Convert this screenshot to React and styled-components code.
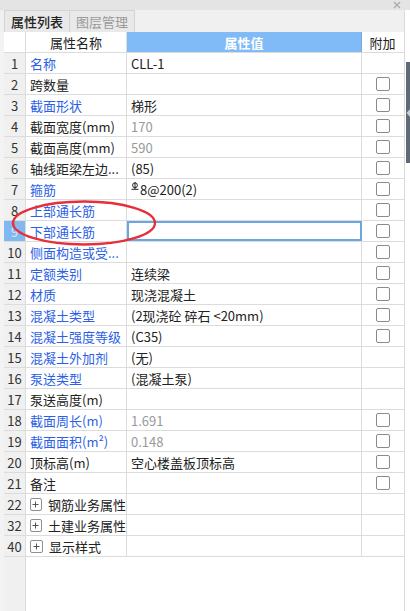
import React from 'react';
import styled, { createGlobalStyle } from 'styled-components';

const GlobalStyle = createGlobalStyle`
  html, body { margin: 0; padding: 0; background: #f3f3f3; }
  body { font-family: "Noto Sans CJK SC", "Noto Sans", sans-serif; font-size: 13px; color: #222; }
`;

const COLS = '22px 101px 235px 41px';

const Window = styled.div`
  width: 410px;
  height: 611px;
  display: flex;
  flex-direction: column;
  overflow: hidden;
`;

const TitleStrip = styled.div`
  height: 10px;
  background: #e4e4e4;
  display: flex;
  justify-content: flex-end;
  align-items: center;
  padding-right: 9px;
`;

const Main = styled.div`
  flex: 1;
  display: flex;
  min-height: 0;
`;

const Panel = styled.div`
  width: 400px;
  margin-left: 4px;
  display: flex;
  flex-direction: column;
  border-right: 1px solid #dadada;
  position: relative;
`;

const SideRail = styled.div`
  flex: 1;
  display: flex;
  justify-content: flex-end;
  background: #fff;
`;

const Handle = styled.div`
  width: 4px;
  height: 101px;
  margin-top: 52px;
  background: #5f6a76;
  display: flex;
  align-items: center;
`;

const TabBar = styled.div`
  height: 22px;
  display: flex;
  background: #f0f0f0;
  margin-left: -4px;
  padding-left: 4px;
`;

const Tab = styled.div`
  width: 64px;
  height: 21px;
  border: 1px solid #d4d4d4;
  border-left: ${({ $first }) => ($first ? '1px solid #d4d4d4' : 'none')};
  border-bottom: none;
  background: #e9e9e9;
  color: ${({ $active }) => ($active ? '#222' : '#9a9a9a')};
  font-weight: ${({ $active }) => ($active ? 500 : 400)};
  display: flex;
  align-items: center;
  justify-content: center;
  font-size: 13px;
`;

const Row = styled.div`
  display: grid;
  grid-template-columns: ${COLS};
  height: 21px;
  border-bottom: 1px solid #dcdcdc;
  box-sizing: border-box;
  background: #fff;
`;

const Cell = styled.div`
  border-right: 1px solid #dcdcdc;
  display: flex;
  align-items: center;
  white-space: nowrap;
  overflow: hidden;
  box-sizing: border-box;
  padding-left: ${({ $pad }) => $pad ?? 4}px;
  justify-content: ${({ $center }) => ($center ? 'center' : 'flex-start')};
  &:last-child { border-right: none; }
`;

const NumCell = styled(Cell)`
  background: ${({ $selected }) => ($selected ? '#80b8ef' : '#f0f0f0')};
  color: ${({ $selected }) => ($selected ? '#d4e7fa' : '#333')};
  justify-content: center;
  padding-left: 0;
  font-size: 13px;
`;

const HeadValue = styled(Cell)`
  background: #80bbf7;
  color: #fff;
  font-weight: 700;
  justify-content: center;
  padding-left: 0;
  border-right: 1px solid #7aa9da;
`;

const NameText = styled.span`
  color: ${({ $link }) => ($link ? '#2c5fe6' : '#222')};
`;

const ValueCell = styled(Cell)`
  color: ${({ $muted }) => ($muted ? '#9a9a9a' : '#222')};
  ${({ $selected }) =>
    $selected &&
    `
    border: 2px solid #6aa6e2;
    padding-left: 2px;
  `}
`;

const Check = styled.div`
  width: 12px;
  height: 12px;
  border: 1px solid #8a8a8a;
  border-radius: 2px;
  background: #fff;
`;

const Expander = styled.div`
  width: 11px;
  height: 11px;
  border: 1px solid #8f8f8f;
  border-radius: 2px;
  display: flex;
  align-items: center;
  justify-content: center;
  margin-right: 6px;
`;

const Filler = styled.div`
  flex: 1;
  display: grid;
  grid-template-columns: 22px 1fr;
`;

const FillerNum = styled.div`
  background: #f0f0f0;
  border-right: 1px solid #dcdcdc;
`;

const FillerRest = styled.div`
  background: #fff;
`;

const Ring = styled.svg`
  position: absolute;
  left: 4px;
  top: 189px;
  pointer-events: none;
`;

const RebarMark = styled.svg`
  margin-right: 1px;
  margin-top: -6px;
`;

const rows = [
  { n: 1, name: '名称', link: true, value: 'CLL-1', box: false },
  { n: 2, name: '跨数量', value: '', box: true },
  { n: 3, name: '截面形状', link: true, value: '梯形', box: true },
  { n: 4, name: '截面宽度(mm)', value: '170', muted: true, box: true },
  { n: 5, name: '截面高度(mm)', value: '590', muted: true, box: true },
  { n: 6, name: '轴线距梁左边...', value: '(85)', box: true },
  { n: 7, name: '箍筋', link: true, value: '8@200(2)', rebar: true, box: true },
  { n: 8, name: '上部通长筋', link: true, value: '', box: true },
  { n: 9, name: '下部通长筋', link: true, value: '', box: true, selected: true },
  { n: 10, name: '侧面构造或受...', link: true, value: '', box: true },
  { n: 11, name: '定额类别', link: true, value: '连续梁', box: true },
  { n: 12, name: '材质', link: true, value: '现浇混凝土', box: true },
  { n: 13, name: '混凝土类型', link: true, value: '(2现浇砼 碎石 <20mm)', box: true },
  { n: 14, name: '混凝土强度等级', link: true, value: '(C35)', box: true },
  { n: 15, name: '混凝土外加剂', link: true, value: '(无)', box: false },
  { n: 16, name: '泵送类型', link: true, value: '(混凝土泵)', box: false },
  { n: 17, name: '泵送高度(m)', value: '', box: false },
  { n: 18, name: '截面周长(m)', link: true, value: '1.691', muted: true, box: true },
  { n: 19, name: '截面面积(m²)', link: true, value: '0.148', muted: true, box: true },
  { n: 20, name: '顶标高(m)', value: '空心楼盖板顶标高', box: true },
  { n: 21, name: '备注', value: '', box: true },
];

const groups = [
  { n: 22, name: '钢筋业务属性' },
  { n: 32, name: '土建业务属性' },
  { n: 40, name: '显示样式' },
];

function Rebar() {
  return (
    <RebarMark width="8" height="8" viewBox="0 0 8 8">
      <circle cx="4" cy="3.3" r="2.4" fill="none" stroke="#222" strokeWidth="1" />
      <line x1="4" y1="0" x2="4" y2="7" stroke="#222" strokeWidth="1" />
      <line x1="0.5" y1="7.3" x2="7.5" y2="7.3" stroke="#222" strokeWidth="1" />
    </RebarMark>
  );
}

function CloseIcon() {
  return (
    <svg width="8" height="8" viewBox="0 0 8 8">
      <path d="M1 1 L7 7 M7 1 L1 7" stroke="#a8a8a8" strokeWidth="1.2" fill="none" />
    </svg>
  );
}

function PlusIcon() {
  return (
    <svg width="7" height="7" viewBox="0 0 7 7">
      <path d="M3.5 0.5 V6.5 M0.5 3.5 H6.5" stroke="#555" strokeWidth="1" fill="none" />
    </svg>
  );
}

function HandleArrow() {
  return (
    <svg width="4" height="8" viewBox="0 0 4 8">
      <path d="M4 0 L0.5 4 L4 8 Z" fill="#c8ced4" />
    </svg>
  );
}

export default function App() {
  return (
    <Window>
      <GlobalStyle />
      <TitleStrip>
        <CloseIcon />
      </TitleStrip>
      <Main>
        <Panel>
          <TabBar>
            <Tab $active $first>属性列表</Tab>
            <Tab>图层管理</Tab>
          </TabBar>
          <Row>
            <Cell />
            <Cell $center $pad={0}>属性名称</Cell>
            <HeadValue>属性值</HeadValue>
            <Cell $center $pad={0}>附加</Cell>
          </Row>
          {rows.map((r) => (
            <Row key={r.n}>
              <NumCell $selected={r.selected}>{r.n}</NumCell>
              <Cell>
                <NameText $link={r.link}>{r.name}</NameText>
              </Cell>
              <ValueCell $muted={r.muted} $selected={r.selected}>
                {r.rebar && <Rebar />}
                {r.value}
              </ValueCell>
              <Cell $center $pad={0}>{r.box && <Check />}</Cell>
            </Row>
          ))}
          {groups.map((g) => (
            <Row key={g.n}>
              <NumCell>{g.n}</NumCell>
              <Cell>
                <Expander>
                  <PlusIcon />
                </Expander>
                <NameText>{g.name}</NameText>
              </Cell>
              <Cell />
              <Cell />
            </Row>
          ))}
          <Filler>
            <FillerNum />
            <FillerRest />
          </Filler>
          <Ring width="150" height="48" viewBox="0 0 150 48">
            <ellipse cx="76" cy="24" rx="71" ry="21.5" fill="none" stroke="#e5303a" strokeWidth="2.4" />
          </Ring>
        </Panel>
        <SideRail>
          <Handle>
            <HandleArrow />
          </Handle>
        </SideRail>
      </Main>
    </Window>
  );
}
